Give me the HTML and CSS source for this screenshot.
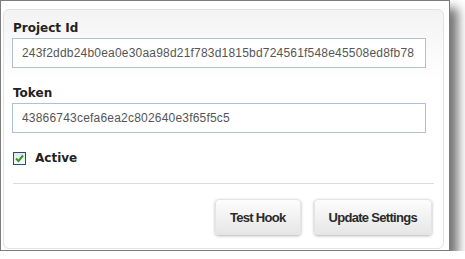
FILE: index.html
```html
<!DOCTYPE html>
<html lang="en">

<head>
  <meta charset="UTF-8">
  <title>Hook Settings</title>
  <link rel="stylesheet" href="styles.css">
</head>

<body>
  <div class="window">
    <form class="panel">
      <div class="form-group">
        <label for="project-id">Project Id</label>
        <input type="text" id="project-id" value="243f2ddb24b0ea0e30aa98d21f783d1815bd724561f548e45508ed8fb78">
      </div>

      <div class="form-group">
        <label for="token">Token</label>
        <input type="text" id="token" value="43866743cefa6ea2c802640e3f65f5c5">
      </div>

      <div class="check-row">
        <span class="checkbox">
          <svg width="9" height="9" viewBox="0 0 9 9">
            <path d="M1 4.5 L3.5 7 L8 1.5" fill="none" stroke="#2e9c2a" stroke-width="2"/>
          </svg>
        </span>
        <span class="check-label">Active</span>
      </div>

      <hr class="divider">

      <div class="actions">
        <button type="button">Test Hook</button>
        <button type="button">Update Settings</button>
      </div>
    </form>
  </div>
</body>

</html>
```

FILE: styles.css
```css
body {
  margin: 0;
  background-color: #fff;
  font-family: "DejaVu Sans", Verdana, sans-serif;
}

.window {
  width: 446px;
  height: 241px;
  border: 1px solid #7c7c7c;
  padding: 8px 0 0 2px;
  box-sizing: content-box;
  background-color: #fff;
  box-shadow: 8px 8px 10px rgba(0, 0, 0, 0.55);
  overflow: hidden;
}

.panel {
  width: 441px;
  height: 240px;
  box-sizing: border-box;
  margin: 0;
  padding: 10px 9px 0 8px;
  border: 1px solid #e2e2e2;
  border-radius: 6px;
  background: linear-gradient(#f3f3f3, #fff 70px);
}

.form-group {
  margin-bottom: 17px;
}

label,
.check-label {
  display: block;
  height: 16px;
  line-height: 16px;
  margin: 0 0 2px 1px;
  font-size: 12px;
  font-weight: bold;
  color: #222;
}

input[type="text"] {
  display: block;
  width: 414px;
  height: 30px;
  box-sizing: border-box;
  padding: 0 6px 0 9px;
  border: 1px solid #aec0d3;
  background-color: #fff;
  font-family: "Liberation Sans", Arial, sans-serif;
  font-size: 12px;
  letter-spacing: 0.2px;
  color: #555;
}

.check-row {
  display: flex;
  align-items: center;
  gap: 9px;
  height: 16px;
  padding-left: 1px;
}

.check-row .check-label {
  margin: 0;
}

.checkbox {
  display: flex;
  align-items: center;
  justify-content: center;
  width: 13px;
  height: 13px;
  box-sizing: border-box;
  border: 1px solid #1d5180;
  background: linear-gradient(#e4e4e4, #fafafa);
}

.divider {
  margin: 17px 0 0 1px;
  border: none;
  border-top: 1px solid #dcdcdc;
}

.actions {
  display: flex;
  justify-content: flex-end;
  gap: 13px;
  margin-top: 15px;
  padding-right: 2px;
}

button {
  height: 36px;
  padding: 0 14px;
  border: 1px solid #e4e4e4;
  border-radius: 4px;
  background: linear-gradient(#fdfdfd, #e6e6e6);
  box-shadow: 0 1px 3px rgba(0, 0, 0, 0.3);
  font-family: "Liberation Sans", Arial, sans-serif;
  font-size: 13px;
  font-weight: bold;
  letter-spacing: -0.7px;
  color: #2a2a2a;
  cursor: pointer;
}
```
